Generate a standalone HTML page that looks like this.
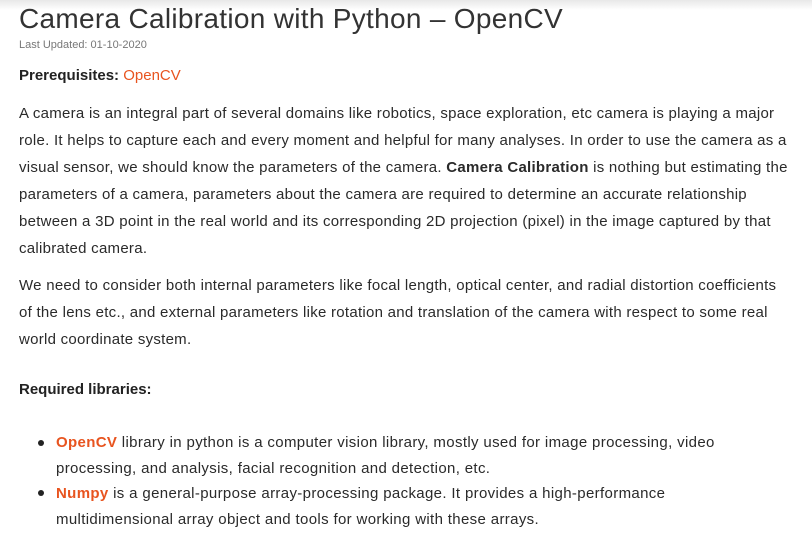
<!DOCTYPE html>
<html><head><meta charset="utf-8"><style>
body{margin:0;width:812px;height:550px;overflow:hidden;background:#fff;font-family:"Liberation Sans",sans-serif;color:#222;position:relative}
.sh{position:absolute;top:0;left:0;right:0;height:10px;background:linear-gradient(#e8e8e8,#fff)}
.t{position:absolute;white-space:nowrap}
h1{position:absolute;left:19px;top:3px;margin:0;font-weight:normal;font-size:28px;letter-spacing:0.3px;color:#333;white-space:nowrap}
.o{color:#e8541f}
b.o{color:#e8541f}
.p{font-size:15px;line-height:27px;color:#2a2a2a;letter-spacing:0.27px}
.dot{position:absolute;width:6px;height:6px;border-radius:50%;background:#222}
</style></head><body>
<div class="sh"></div>
<h1>Camera Calibration with Python – OpenCV</h1>
<div class="t" style="left:19px;top:39px;font-size:11px;color:#777">Last Updated: 01-10-2020</div>
<div class="t" style="left:19px;top:67px;font-size:15px;"><b>Prerequisites:</b> <span class="o">OpenCV</span></div>
<div class="t p" style="left:19px;top:100px">A camera is an integral part of several domains like robotics, space exploration, etc camera is playing a major<br>role. It helps to capture each and every moment and helpful for many analyses. In order to use the camera as a<br>visual sensor, we should know the parameters of the camera. <b>Camera Calibration</b> is nothing but estimating the<br>parameters of a camera, parameters about the camera are required to determine an accurate relationship<br>between a 3D point in the real world and its corresponding 2D projection (pixel) in the image captured by that<br>calibrated camera.</div>
<div class="t p" style="left:19px;top:272px">We need to consider both internal parameters like focal length, optical center, and radial distortion coefficients<br>of the lens etc., and external parameters like rotation and translation of the camera with respect to some real<br>world coordinate system.</div>
<div class="t" style="left:19px;top:381px;font-size:15px;font-weight:bold">Required libraries:</div>
<div class="dot" style="left:38px;top:440px"></div>
<div class="dot" style="left:38px;top:490px"></div>
<div class="t" style="left:56px;top:430px;font-size:15px;line-height:25.5px;color:#2a2a2a;letter-spacing:0.35px"><b class="o">OpenCV</b> library in python is a computer vision library, mostly used for image processing, video<br>processing, and analysis, facial recognition and detection, etc.<br><b class="o">Numpy</b> is a general-purpose array-processing package. It provides a high-performance<br>multidimensional array object and tools for working with these arrays.</div>
</body></html>
